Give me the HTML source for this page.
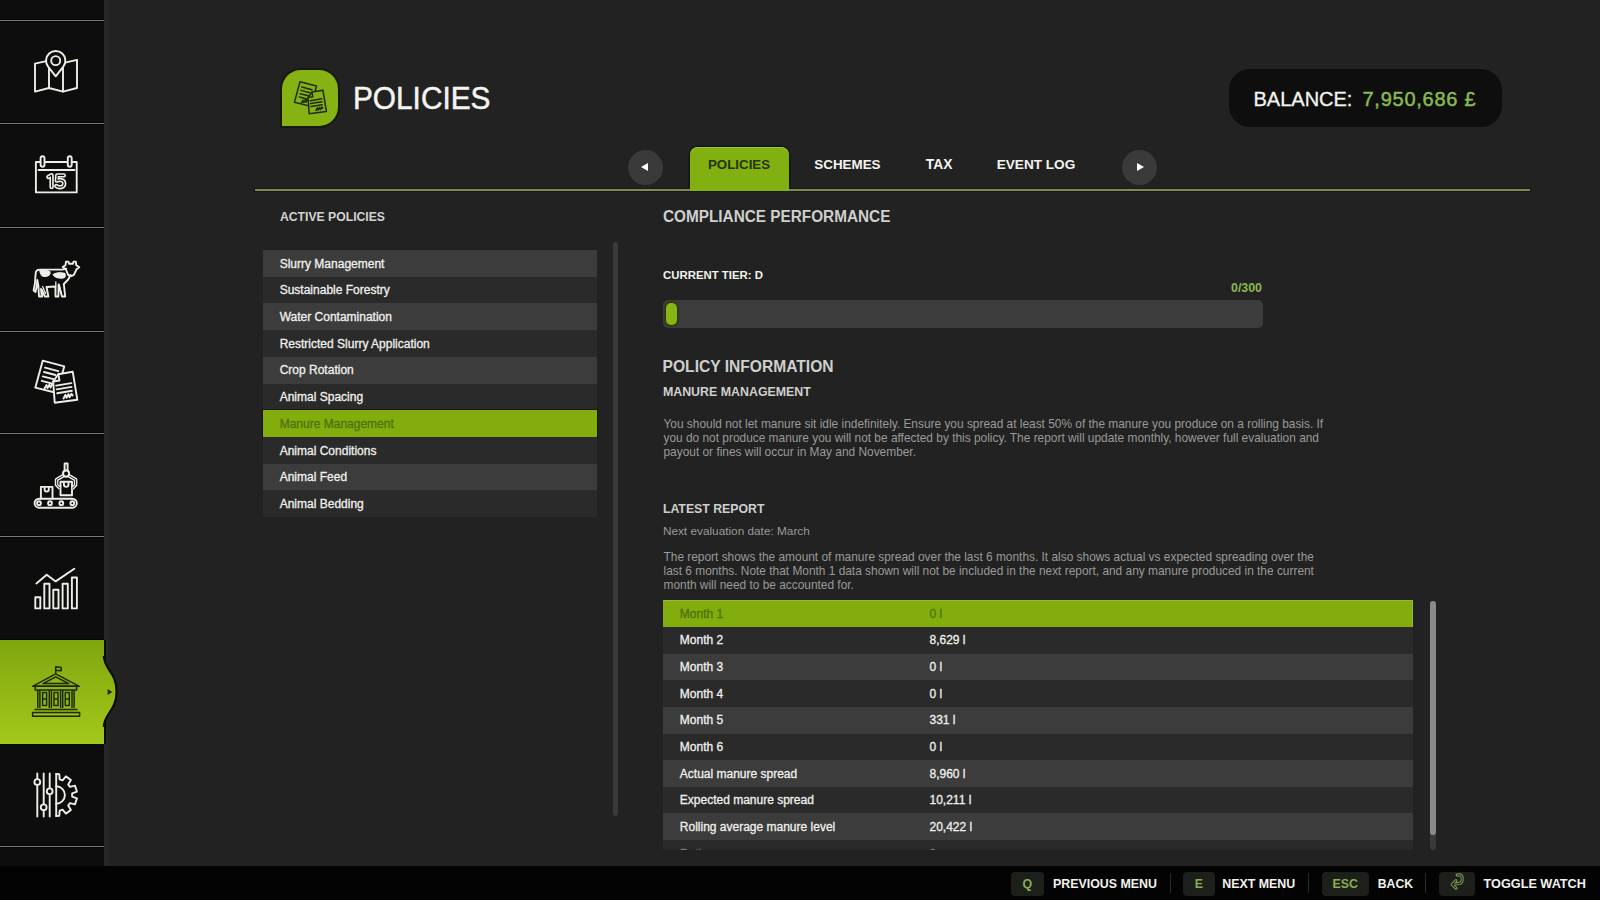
<!DOCTYPE html>
<html><head><meta charset="utf-8">
<style>
html,body{margin:0;padding:0;width:1600px;height:900px;overflow:hidden;background:#222222;font-family:"Liberation Sans",sans-serif;}
.a{position:absolute;}
.t{position:absolute;white-space:nowrap;line-height:1;}
.s{-webkit-text-stroke:0.3px currentColor;}
#side{left:0;top:0;width:104px;height:866px;background:#0d0d0d;}
#strip{left:104px;top:0;width:5px;height:866px;background:#262626;}
.sep{position:absolute;left:0;width:104px;height:3px;background:#050505;}
.sep i{position:absolute;left:0;top:1px;width:104px;height:1px;background:#7a7a7a;}
#active{left:0;top:640px;width:104px;height:104px;background:linear-gradient(#7fa60f,#a4c81b);}
#bottom{left:0;top:866px;width:1600px;height:34px;background:#030303;}
.row{position:absolute;height:27px;}
.l{background:#3c3c3c;}
.d{background:#2a2a2a;}
.g{background:#82ad0c;box-shadow:0 0 0 1px #141a06;}
.g2{background:#82ad0c;box-shadow:0 0 0 1px #141a06, inset 0 1px 0 #95b845, inset -1px 0 0 #95b845;}
</style></head><body>
<div class="a" id="side"></div><div class="a" id="strip"></div>
<div class="sep" style="top:19px"><i></i></div>
<div class="sep" style="top:122px"><i></i></div>
<div class="sep" style="top:226px"><i></i></div>
<div class="sep" style="top:330px"><i></i></div>
<div class="sep" style="top:432px"><i></i></div>
<div class="sep" style="top:535px"><i></i></div>
<div class="sep" style="top:639px"><i></i></div>
<div class="sep" style="top:845px"><i></i></div>
<div class="a" id="active"></div>
<div class="a" id="bottom"></div>

<!-- header -->
<div class="a" id="ticon" style="left:282px;top:70px;width:56px;height:56px;background:#86b313;border-radius:19px 19px 19px 0;box-shadow:0 0 0 2px #151a08;"></div>
<div class="t" id="title" style="-webkit-text-stroke:0.5px currentColor;left:353px;top:82.8px;font-size:31.7px;color:#f4f4f0;transform:scaleX(0.94);transform-origin:0 0;">POLICIES</div>
<div class="a" id="balbox" style="left:1229px;top:69px;width:273px;height:58px;background:#0e0e0e;border-radius:21px;"></div>
<div class="t s" id="bal" style="left:1253.5px;top:89px;font-size:20px;color:#f4f4f0;">BALANCE:</div>
<div class="t" id="num" style="-webkit-text-stroke:0.45px currentColor;left:1362.5px;top:89px;font-size:20px;letter-spacing:0.75px;color:#8cba4e;">7,950,686 £</div>
<!-- tabs -->
<div class="a" id="navl" style="left:628px;top:150px;width:35px;height:35px;border-radius:50%;background:#3a3a3a;"></div>
<div class="a" id="navr" style="left:1122px;top:150px;width:35px;height:35px;border-radius:50%;background:#3a3a3a;"></div>
<div class="a" style="left:641px;top:163px;width:0;height:0;border-top:4px solid transparent;border-bottom:4px solid transparent;border-right:7px solid #fff;"></div>
<div class="a" style="left:1137px;top:163px;width:0;height:0;border-top:4px solid transparent;border-bottom:4px solid transparent;border-left:7px solid #fff;"></div>
<div class="a" id="tabg" style="left:690px;top:147px;width:99px;height:43px;background:#82b010;border-radius:8px 8px 0 0;box-shadow:0 0 0 1.5px #11160a, inset 0 1px 0 #9cc43a;"></div>
<div class="t" id="tab1" style="left:708px;top:157.7px;font-size:13.3px;font-weight:bold;color:#243208;">POLICIES</div>
<div class="t" id="tab2" style="left:814.3px;top:158.3px;font-size:13.4px;font-weight:bold;color:#f4f4f0;">SCHEMES</div>
<div class="t" id="tab3" style="left:925.8px;top:158.3px;font-size:13.8px;font-weight:bold;color:#f4f4f0;">TAX</div>
<div class="t" id="tab4" style="left:996.7px;top:158.3px;font-size:13.6px;font-weight:bold;color:#f4f4f0;">EVENT LOG</div>
<div class="a" id="hline" style="left:255px;top:188.5px;width:1275px;height:2px;background:#7d8b58;box-shadow:0 0 0 1px #171a10;"></div>
<div class="a" style="left:690px;top:188px;width:99px;height:3px;background:#82b010;"></div>
<!-- left list -->
<div class="t" id="active_h" style="left:280px;top:210.8px;font-size:12.2px;font-weight:bold;color:#d2d2d0;">ACTIVE POLICIES</div>
<div class="a" id="list" style="left:263px;top:250px;width:334px;">
 <div class="row l" style="top:0;width:334px;"></div>
 <div class="row d" style="top:26.7px;width:334px;"></div>
 <div class="row l" style="top:53.4px;width:334px;"></div>
 <div class="row d" style="top:80.1px;width:334px;"></div>
 <div class="row l" style="top:106.8px;width:334px;"></div>
 <div class="row d" style="top:133.5px;width:334px;"></div>
 <div class="row g" style="top:160.2px;width:334px;"></div>
 <div class="row d" style="top:186.9px;width:334px;"></div>
 <div class="row l" style="top:213.6px;width:334px;"></div>
 <div class="row d" style="top:240.3px;width:334px;"></div>
</div>
<div id="listtext" class="s" style="position:absolute;left:279.7px;top:0;font-size:12px;color:#f0f0ec;">
 <div class="t" style="top:257.6px">Slurry Management</div>
 <div class="t" style="top:284.3px">Sustainable Forestry</div>
 <div class="t" style="top:311px">Water Contamination</div>
 <div class="t" style="top:337.7px">Restricted Slurry Application</div>
 <div class="t" style="top:364.4px">Crop Rotation</div>
 <div class="t" style="top:391.1px">Animal Spacing</div>
 <div class="t" style="top:417.8px;color:#4e7211">Manure Management</div>
 <div class="t" style="top:444.5px">Animal Conditions</div>
 <div class="t" style="top:471.2px">Animal Feed</div>
 <div class="t" style="top:497.9px">Animal Bedding</div>
</div>
<div class="a" id="lscroll" style="left:613.3px;top:241.8px;width:5px;height:574px;background:#3a3a3a;border-radius:2.5px;"></div>
<!-- right -->
<div class="t" id="comp" style="left:662.8px;top:209.2px;font-size:16px;transform:scaleX(0.958);transform-origin:0 0;font-weight:bold;color:#cfcfcd;">COMPLIANCE PERFORMANCE</div>
<div class="t" id="tier" style="left:663px;top:270px;font-size:11.4px;font-weight:bold;color:#f2f2ee;">CURRENT TIER: D</div>
<div class="t" id="n300" style="left:1231px;top:281.7px;font-size:12.4px;font-weight:bold;color:#8cb84c;">0/300</div>
<div class="a" id="pbar" style="left:663px;top:300px;width:600px;height:28px;background:#3c3c3c;border-radius:5px;"></div>
<div class="a" id="pill" style="left:666px;top:303px;width:11px;height:22px;background:#86b515;border-radius:5px;box-shadow:0 0 0 1.5px #2a3a0a;"></div>
<div class="t" id="polinfo" style="left:662.6px;top:359.4px;font-size:15.6px;font-weight:bold;color:#cfcfcd;">POLICY INFORMATION</div>
<div class="t" id="manure" style="left:662.9px;top:385.75px;font-size:12.4px;font-weight:bold;color:#cfcfcd;">MANURE MANAGEMENT</div>
<div class="a" id="para1" style="left:663.5px;top:416.7px;width:680px;font-size:11.9px;line-height:14px;color:#9a9a98;">You should not let manure sit idle indefinitely. Ensure you spread at least 50% of the manure you produce on a rolling basis. If<br>you do not produce manure you will not be affected by this policy. The report will update monthly, however full evaluation and<br>payout or fines will occur in May and November.</div>
<div class="t" id="latest" style="left:662.9px;top:502.6px;font-size:12.3px;font-weight:bold;color:#cfcfcd;">LATEST REPORT</div>
<div class="t" id="nexte" style="left:662.9px;top:525.6px;font-size:11.8px;color:#9a9a98;">Next evaluation date: March</div>
<div class="a" id="para2" style="left:663.5px;top:549.9px;width:700px;font-size:11.9px;line-height:14px;color:#9a9a98;">The report shows the amount of manure spread over the last 6 months. It also shows actual vs expected spreading over the<br>last 6 months. Note that Month 1 data shown will not be included in the next report, and any manure produced in the current<br>month will need to be accounted for.</div>
<div class="a" id="table" style="left:663px;top:600.3px;width:750px;height:249.7px;overflow:hidden;">
 <div class="row g2" style="top:0;width:750px;"></div>
 <div class="row d" style="top:26.65px;width:750px;"></div>
 <div class="row l" style="top:53.3px;width:750px;"></div>
 <div class="row d" style="top:79.95px;width:750px;"></div>
 <div class="row l" style="top:106.6px;width:750px;"></div>
 <div class="row d" style="top:133.25px;width:750px;"></div>
 <div class="row l" style="top:159.9px;width:750px;"></div>
 <div class="row d" style="top:186.55px;width:750px;"></div>
 <div class="row l" style="top:213.2px;width:750px;"></div>
 <div class="row d" style="top:239.85px;width:750px;"></div>
 <div class="s" style="position:absolute;left:16.8px;top:0.8px;font-size:12px;color:#f0f0ec;">
  <div class="t" style="top:6.7px;color:#4e7211">Month 1</div>
  <div class="t" style="top:33.35px">Month 2</div>
  <div class="t" style="top:60.0px">Month 3</div>
  <div class="t" style="top:86.65px">Month 4</div>
  <div class="t" style="top:113.3px">Month 5</div>
  <div class="t" style="top:139.95px">Month 6</div>
  <div class="t" style="top:166.6px">Actual manure spread</div>
  <div class="t" style="top:193.25px">Expected manure spread</div>
  <div class="t" style="top:219.9px">Rolling average manure level</div>
  <div class="t" style="top:246.55px;color:#777">Rating</div>
 </div>
 <div class="s" style="position:absolute;left:266.5px;top:0.8px;font-size:12px;color:#f0f0ec;">
  <div class="t" style="top:6.7px;color:#4e7211">0 l</div>
  <div class="t" style="top:33.35px">8,629 l</div>
  <div class="t" style="top:60.0px">0 l</div>
  <div class="t" style="top:86.65px">0 l</div>
  <div class="t" style="top:113.3px">331 l</div>
  <div class="t" style="top:139.95px">0 l</div>
  <div class="t" style="top:166.6px">8,960 l</div>
  <div class="t" style="top:193.25px">10,211 l</div>
  <div class="t" style="top:219.9px">20,422 l</div>
  <div class="t" style="top:246.55px;color:#777">0</div>
 </div>
</div>
<div class="a" id="tscroll" style="left:1430px;top:600.5px;width:6px;height:249px;background:#3a3a3a;border-radius:3px;"></div>
<div class="a" style="left:1430px;top:600.5px;width:6px;height:234px;background:#8a8a8a;border-radius:3px;"></div>
<!-- bottom -->
<div class="a" style="left:1011px;top:872px;width:33px;height:24px;background:#1c1f1a;border-radius:4px;"></div>
<div class="t" style="left:1022.5px;top:878px;font-size:12.4px;font-weight:bold;color:#8aae50;">Q</div>
<div class="t" id="prev" style="left:1053px;top:878px;font-size:12.4px;font-weight:bold;color:#f2f2ee;">PREVIOUS MENU</div>
<div class="a" style="left:1170px;top:873px;width:1px;height:20px;background:#2a2a2a;"></div>
<div class="a" style="left:1183px;top:872px;width:32px;height:24px;background:#1c1f1a;border-radius:4px;"></div>
<div class="t" style="left:1194.8px;top:878px;font-size:12.4px;font-weight:bold;color:#8aae50;">E</div>
<div class="t" id="nextm" style="left:1222.2px;top:878px;font-size:12.4px;font-weight:bold;color:#f2f2ee;">NEXT MENU</div>
<div class="a" style="left:1308px;top:873px;width:1px;height:20px;background:#2a2a2a;"></div>
<div class="a" style="left:1322px;top:872px;width:47px;height:24px;background:#1c1f1a;border-radius:4px;"></div>
<div class="t" style="left:1332.5px;top:878px;font-size:12.4px;font-weight:bold;color:#8aae50;">ESC</div>
<div class="t" id="back" style="left:1377.8px;top:878px;font-size:12.2px;font-weight:bold;color:#f2f2ee;">BACK</div>
<div class="a" style="left:1425px;top:873px;width:1px;height:20px;background:#2a2a2a;"></div>
<div class="a" style="left:1439px;top:872px;width:36px;height:24px;background:#1c1f1a;border-radius:4px;"></div>
<div class="t" id="toggle" style="left:1483.5px;top:878px;font-size:12.7px;font-weight:bold;color:#f2f2ee;">TOGGLE WATCH</div>

<svg class="a" style="left:0;top:0;" width="1600" height="900" viewBox="0 0 1600 900">
 <defs>
  <linearGradient id="gg" gradientUnits="userSpaceOnUse" x1="0" y1="640" x2="0" y2="744">
   <stop offset="0" stop-color="#7fa60f"/><stop offset="1" stop-color="#a4c81b"/>
  </linearGradient>
  
 </defs>
 <g fill="none" stroke="#eeede6" stroke-width="1.9" stroke-linejoin="round" stroke-linecap="round">
  <!-- map -->
  <path d="M46.2,61.1 L35,63.6 L35,91.6 L49,88 L63,91.6 L77,88 L77,59.8 L65,62.7"/>
  <path d="M49,68 L49,88 M63,67.5 L63,91.6"/>
  <path d="M55.7,76.3 L48.1,66.6 A9.65,9.65 0 1 1 63.3,66.6 Z" fill="#0e0e0e"/>
  <circle cx="55.7" cy="60.65" r="4.5"/>
  <!-- calendar -->
  <rect x="35.9" y="162" width="40.8" height="30.4"/>
  <path d="M38.5,170 L74.5,170"/>
  <rect x="40.6" y="156.2" width="3.9" height="10.6" rx="1.95" fill="#0e0e0e"/>
  <rect x="67.8" y="156.2" width="3.9" height="10.6" rx="1.95" fill="#0e0e0e"/>
  <path d="M48.3,177 L51.6,175.2 L51.6,187 M63.8,175.4 L57.2,175.4 L56.8,180.6 C59.5,179.4 64.2,179.8 64.2,183.4 C64.2,187.6 58.8,188 56.2,186" stroke-width="4.4"/><path d="M48.3,177 L51.6,175.2 L51.6,187 M63.8,175.4 L57.2,175.4 L56.8,180.6 C59.5,179.4 64.2,179.8 64.2,183.4 C64.2,187.6 58.8,188 56.2,186" stroke="#0d0d0d" stroke-width="1.1"/>
  <!-- cow -->
  <path d="M65.7,269 L62.7,267 L65.5,265.2 L66,261.6 L68.4,261.6 L69,263.8 L73,263.8 L73.5,261.6 L75.8,261.6 L76.3,265.3 L79.3,267.3 L76.7,269 L73.7,275.2 L71,276 L68.3,275.2 Z"/>
  <path d="M66.2,268.8 L62,269.6 L40,269.6 C37,269.6 35.6,271.5 35.6,274 L35,283 L33.6,290.5 L35.5,292 L36.8,286 L37.3,280 L38.4,286 L39,296.5 L42.2,296.5 L41.6,289.5 L45,296.5 L48.4,296.5 L46.5,287 L55.5,286.5 L55.5,296.5 L58.4,296.5 L58.6,284.5 L62,296.5 L65.2,296.5 L63.8,284 L68.2,279.5 L70.5,275"/>
  <path d="M39.8,270.6 C43,270.2 48,270.2 50,272 C50.6,274.5 48,276.6 44,276.3 C41.5,276 40.2,273 39.8,270.6 Z M53.2,274.6 C55,272.8 61,272.4 64.6,273.3 C66,275.2 65.4,278.2 62,278.2 C58,278.2 55,277.2 53.2,274.6 Z" fill="#eeede6" stroke-width="1.2"/>
  <path d="M42.6,286.5 L45.6,293.5 M40.8,288.5 L41.3,295.5 M55.8,281.8 L55.8,286 M59.2,284.5 L61.4,294" stroke-width="1.3"/>
  <!-- docs -->
  <g>
   <path d="M42.7,360.7 L64.3,366.3 L57,393 L35.3,387.7 Z" fill="#0e0e0e"/>
   <path d="M45,367.7 L58.3,371.2 M44,372 L55.5,375 M42.8,376.4 L53.5,379.2 M41.8,380.8 L51.5,383.4 M44.5,388.5 L46.5,385 L47.5,388 L49.5,384.5 L50.5,387.5 L52.5,384" fill="none"/>
   <path d="M58.3,374.3 L72.7,371.7 L77.3,399.7 L54.7,402.7 L53.2,381.5 L59.5,380.5 Z" fill="#0e0e0e"/>
   <path d="M58.3,374.3 L53.2,381.5 M56.2,385.6 L71.3,383.1 M56.7,389.4 L71.6,386.9 M57.2,393.3 L71.9,390.8 M63.5,398.5 L65.5,394.8 L66.5,397.8 L68.5,394.2 L69.5,397.2 L71.5,393.8 L72.6,395.4" fill="none"/>
  </g>
  <!-- production -->
  <rect x="34.6" y="498.7" width="42.2" height="9" rx="4.5"/>
  <circle cx="39" cy="503.2" r="1.9"/><circle cx="50" cy="503.2" r="1.9"/><circle cx="61.3" cy="503.2" r="1.9"/><circle cx="72.3" cy="503.2" r="1.9"/>
  <path d="M40.9,498.7 L40.9,486.9 L52.5,486.9 L52.5,498.7 M44.6,486.9 L44.6,489.5 A2.1,2.1 0 0 0 48.8,489.5 L48.8,486.9"/>
  <path d="M60.5,495.2 L60.5,481.8 L72,481.8 L72,495.2 Z M63.9,481.8 L63.9,484.6 A2.3,2.3 0 0 0 68.5,484.6 L68.5,481.8"/>
  <rect x="64.6" y="463.5" width="3" height="7"/>
  <circle cx="66.1" cy="473.6" r="3"/>
  <path d="M63.5,475.6 L56.6,479.6 L56.6,485 L60.2,488.4 M68.7,475.6 L75.6,479.6 L75.6,485 L72.2,488.4" stroke-width="3.6" stroke-linecap="butt"/><path d="M63.5,475.6 L56.6,479.6 L56.6,485 L60.2,488.4 M68.7,475.6 L75.6,479.6 L75.6,485 L72.2,488.4" stroke="#0d0d0d" stroke-width="0.9" stroke-linecap="butt"/><circle cx="66.1" cy="473.6" r="3" fill="#0d0d0d"/>
  <!-- chart -->
  <rect x="35.3" y="597.2" width="5" height="11.2"/>
  <rect x="44.3" y="583.8" width="5.2" height="24.6"/>
  <rect x="53.3" y="589.8" width="5.2" height="18.6"/>
  <rect x="62.6" y="583.8" width="5.2" height="24.6"/>
  <rect x="71.9" y="577.5" width="5" height="30.9"/>
  <path d="M36.4,583.4 L46.7,574.8 L55.7,581.4 L74.3,568.8"/>
  <!-- settings -->
  <path d="M37.3,773.5 L37.3,816.6 M43.7,773.5 L43.7,816.6 M49.7,773.5 L49.7,816.6"/>
  <circle cx="37.3" cy="782" r="2.9" fill="#0e0e0e"/>
  <circle cx="49.7" cy="791.3" r="2.9" fill="#0e0e0e"/>
  <circle cx="43.7" cy="807.3" r="2.9" fill="#0e0e0e"/>
  <path d="M56.20,774.00 L59.30,774.23 L59.66,779.38 L62.58,780.33 L65.90,776.37 L70.92,780.02 L68.18,784.40 L69.99,786.88 L74.99,785.63 L76.91,791.53 L72.13,793.47 L72.13,796.53 L76.91,798.47 L74.99,804.37 L69.99,803.12 L68.18,805.60 L70.92,809.98 L65.90,813.63 L62.58,809.67 L59.66,810.62 L59.30,815.77 L56.20,816.00"/>
  <path d="M56.2,774 L56.2,816"/>
  <path d="M56.2,786.3 A8.7,8.7 0 0 1 56.2,803.7"/>
 </g>
 <!-- active bump -->
 <rect x="104" y="640" width="2" height="104" fill="#0c0e06"/>
 <path d="M103.8,656 C104.3,670 116.6,672 116.6,691.5 C116.6,711 104.3,713 103.8,727 Z" fill="url(#gg)"/><path d="M103.8,656 C104.3,670 116.6,672 116.6,691.5 C116.6,711 104.3,713 103.8,727" fill="none" stroke="#0c0e06" stroke-width="2.2"/>
 
 <path d="M107.6,689 L112.2,692 L107.6,695 Z" fill="#1c2606"/>
 <!-- building -->
 <g fill="none" stroke="#1c2806" stroke-width="1.5" stroke-linejoin="round">
  <path d="M55.7,673.5 L55.7,666.8 L61.2,667.6 L61.2,670.8 L55.7,670.2"/>
  <path d="M32.6,686.3 L55.7,673.9 L79.3,686.3 Z"/>
  <path d="M43,683.6 L55.7,676.9 L68.8,683.6 Z"/>
  <rect x="35.2" y="686.3" width="41.4" height="3.6"/>
  <path d="M37.8,690 L37.8,708 M39.9,690 L39.9,708 M49.3,690 L49.3,708 M51.4,690 L51.4,708 M60.6,690 L60.6,708 M62.7,690 L62.7,708 M72,690 L72,708 M74.1,690 L74.1,708"/>
  <rect x="42.6" y="692.5" width="4" height="13"/><rect x="54" y="692.5" width="4" height="13"/><rect x="65.3" y="692.5" width="4" height="13"/>
  <path d="M42.6,699 L46.6,699 M54,699 L58,699 M65.3,699 L69.3,699"/>
  <path d="M34.5,709.6 L77.5,709.6"/>
  <rect x="32.6" y="712.6" width="47" height="3.6"/>
 </g>
 <!-- title icon docs -->
 <g transform="translate(267.5,-193.1) scale(0.762)" stroke="#1e2c06" stroke-width="2" stroke-linejoin="round" stroke-linecap="round">
  <path d="M42.7,360.7 L64.3,366.3 L57,393 L35.3,387.7 Z" fill="#86b313"/>
  <path d="M45,367.7 L58.3,371.2 M44,372 L55.5,375 M42.8,376.4 L53.5,379.2 M41.8,380.8 L51.5,383.4 M44.5,388.5 L46.5,385 L47.5,388 L49.5,384.5 L50.5,387.5 L52.5,384" fill="none"/>
  <path d="M58.3,374.3 L72.7,371.7 L77.3,399.7 L54.7,402.7 L53.2,381.5 L59.5,380.5 Z" fill="#86b313"/>
  <path d="M58.3,374.3 L53.2,381.5 M56.2,385.6 L71.3,383.1 M56.7,389.4 L71.6,386.9 M57.2,393.3 L71.9,390.8 M63.5,398.5 L65.5,394.8 L66.5,397.8 L68.5,394.2 L69.5,397.2 L71.5,393.8 L72.6,395.4" fill="none"/>
 </g>
 <!-- watch key icon -->
 <g fill="none" stroke-linecap="round" stroke-linejoin="round"><path d="M1456,880.6 L1452.2,884.5 L1456,888.2 M1452.6,884.5 L1458.6,883.6 C1461.4,883.2 1462.4,881.4 1462.2,879 L1462,877.2 C1461.8,875.6 1460.8,874.8 1459.2,874.8 L1457.2,875" stroke="#86a85a" stroke-width="3"/><path d="M1456,880.6 L1452.2,884.5 L1456,888.2 M1452.6,884.5 L1458.6,883.6 C1461.4,883.2 1462.4,881.4 1462.2,879 L1462,877.2 C1461.8,875.6 1460.8,874.8 1459.2,874.8 L1457.2,875" stroke="#1b2016" stroke-width="1.1"/></g>
</svg>
</body></html>
